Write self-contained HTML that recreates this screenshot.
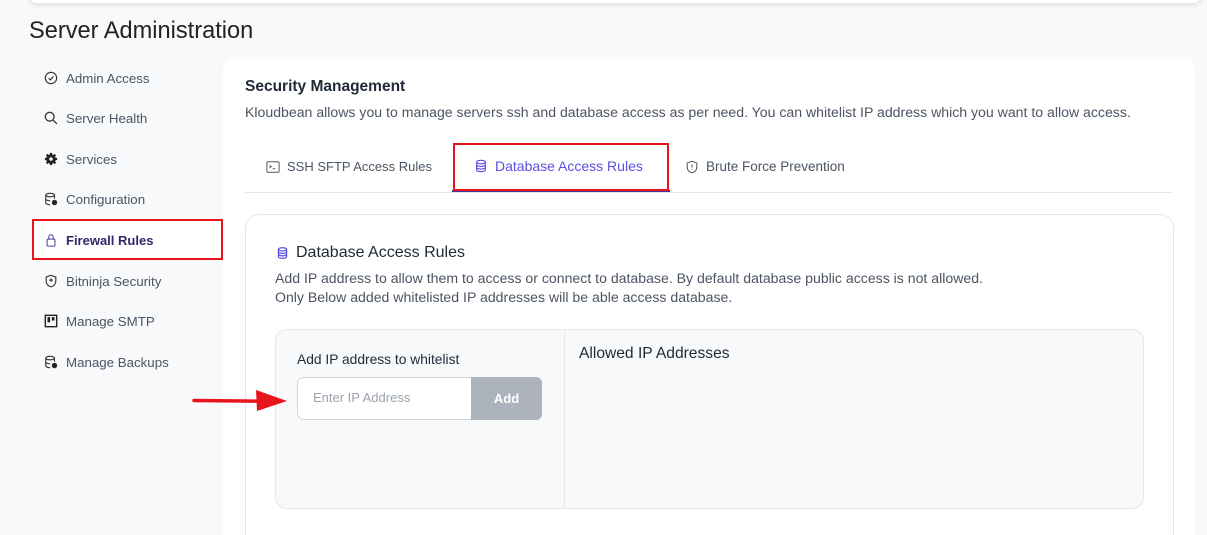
<!DOCTYPE html>
<html><head><meta charset="utf-8"><style>
*{box-sizing:border-box;margin:0;padding:0}
html,body{width:1207px;height:535px;overflow:hidden}
body{background:#f8f9fb;font-family:"Liberation Sans",sans-serif;color:#1f2937;position:relative}
.abs{position:absolute}
.topbar{left:30px;top:-10px;width:1170px;height:13px;background:#fff;box-shadow:0 2px 6px rgba(0,0,0,.12);border-radius:6px}
h1{position:absolute;left:29px;top:18px;font-size:23.6px;font-weight:400;color:#222}
.nav{position:absolute;left:44px;font-size:13.3px;color:#4b5563;display:flex;align-items:center;gap:8px;height:16px}
.nav svg{width:14px;height:14px}
.card{left:223px;top:57px;width:972px;height:478px;background:#fff;border-radius:12px 12px 0 0}
.tab{position:absolute;top:159px;font-size:13px;color:#4b5563;display:flex;align-items:center;gap:7px;font-weight:500}
.tab svg{width:14px;height:14px}
</style></head><body>
<div class="abs topbar"></div>
<h1>Server Administration</h1>

<div class="nav" style="top:70px"><svg viewBox="0 0 16 16" fill="none" stroke="#333" stroke-width="1.3"><circle cx="8" cy="8" r="6.5"/><path d="M5.3 8.2l2 2 3.5-4"/></svg>Admin Access</div>
<div class="nav" style="top:110px"><svg viewBox="0 0 16 16" fill="none" stroke="#333" stroke-width="1.5"><circle cx="6.5" cy="6.5" r="5"/><path d="M10.2 10.2l4.5 4.5"/></svg>Server Health</div>
<div class="nav" style="top:151px"><svg viewBox="0 0 16 16"><circle cx="8" cy="8" r="5.5" fill="#222"/><g stroke="#222" stroke-width="2.6"><path d="M8 1v14M1 8h14M3 3l10 10M13 3L3 13"/></g><circle cx="8" cy="8" r="2" fill="#fff"/></svg>Services</div>
<div class="nav" style="top:191px"><svg viewBox="0 0 16 16" fill="none" stroke="#333" stroke-width="1.3"><ellipse cx="7" cy="3.5" rx="5" ry="2"/><path d="M2 3.5v9c0 1.1 2.2 2 5 2M12 3.5v4M2 8c0 1.1 2.2 2 5 2"/><circle cx="12" cy="12" r="2.5" fill="#222"/></svg>Configuration</div>
<div class="abs" style="left:32px;top:219px;width:191px;height:41px;background:#fff;border:2px solid #e8141b"></div>
<div class="nav" style="top:232px;color:#2e2a6b;font-weight:700;font-size:13px"><svg viewBox="0 0 16 16" fill="none" stroke="#4a43a0" stroke-width="1.2"><rect x="3.5" y="7" width="9" height="8" rx="1.5"/><path d="M5.5 7V4.5a2.5 2.5 0 015 0V7"/></svg>Firewall Rules</div>
<div class="nav" style="top:273px"><svg viewBox="0 0 16 16" fill="none" stroke="#333" stroke-width="1.3"><path d="M8 1.5l5.5 2v4.5c0 3.5-2.5 5.8-5.5 6.7C5 13.8 2.5 11.5 2.5 8V3.5z"/><path d="M8 5v4M6 7h4"/></svg>Bitninja Security</div>
<div class="nav" style="top:313px"><svg viewBox="0 0 16 16"><rect x="1.5" y="1.5" width="13" height="13" fill="none" stroke="#222" stroke-width="1.6"/><rect x="4" y="3.5" width="3" height="6" fill="#222"/><rect x="9" y="3.5" width="3" height="4" fill="#222"/></svg>Manage SMTP</div>
<div class="nav" style="top:354px"><svg viewBox="0 0 16 16" fill="none" stroke="#333" stroke-width="1.3"><ellipse cx="7" cy="3.5" rx="5" ry="2"/><path d="M2 3.5v9c0 1.1 2.2 2 5 2M12 3.5v4M2 8c0 1.1 2.2 2 5 2"/><circle cx="12" cy="12" r="2.5" fill="#222"/></svg>Manage Backups</div>

<div class="abs card"></div>
<div class="abs" style="left:245px;top:78px;font-size:15.5px;font-weight:700;color:#1f2937">Security Management</div>
<div class="abs" style="left:245px;top:104px;font-size:14.1px;color:#4b5563">Kloudbean allows you to manage servers ssh and database access as per need. You can whitelist IP address which you want to allow access.</div>

<div class="tab" style="left:266px"><svg viewBox="0 0 16 16" fill="none" stroke="#555" stroke-width="1.1"><rect x="1" y="2" width="14" height="12" rx="1.5"/><path d="M4 6l2 1.5L4 9M7.5 10h3"/></svg>SSH SFTP Access Rules</div>
<div class="tab" style="left:474px;top:158px;color:#5b4fe0;font-size:14px"><svg viewBox="0 0 16 16" fill="none" stroke="#5b4fe0" stroke-width="1.3"><ellipse cx="8" cy="3.5" rx="5" ry="2"/><path d="M3 3.5v9c0 1.1 2.2 2 5 2s5-.9 5-2v-9M3 6.5c0 1.1 2.2 2 5 2s5-.9 5-2M3 9.5c0 1.1 2.2 2 5 2s5-.9 5-2"/></svg>Database Access Rules</div>
<div class="tab" style="left:685px;font-size:13.5px"><svg viewBox="0 0 16 16" fill="none" stroke="#555" stroke-width="1.2"><path d="M8 1.5l5.5 2v4.5c0 3.5-2.5 5.8-5.5 6.7C5 13.8 2.5 11.5 2.5 8V3.5z"/><path d="M8 5v3.5M8 10.2v.6"/></svg>Brute Force Prevention</div>
<div class="abs" style="left:245px;top:192px;width:928px;height:1px;background:#e5e7eb"></div>
<div class="abs" style="left:452px;top:190px;width:218px;height:2px;background:#3b35a0"></div>
<div class="abs" style="left:453px;top:143px;width:216px;height:48px;border:2px solid #e8141b"></div>

<div class="abs" style="left:245px;top:214px;width:929px;height:340px;border:1px solid #e5e7eb;border-radius:14px;background:#fff"></div>
<div class="abs" style="left:276px;top:244px;display:flex;align-items:center;gap:7px;font-size:16px;font-weight:500;color:#1f2937"><svg width="13" height="14" viewBox="0 0 16 16" fill="none" stroke="#5b4fe0" stroke-width="1.5"><ellipse cx="8" cy="3.5" rx="5" ry="2"/><path d="M3 3.5v9c0 1.1 2.2 2 5 2s5-.9 5-2v-9M3 6.5c0 1.1 2.2 2 5 2s5-.9 5-2M3 9.5c0 1.1 2.2 2 5 2s5-.9 5-2"/></svg>Database Access Rules</div>
<div class="abs" style="left:275px;top:269px;font-size:14.1px;color:#4b5563;line-height:19px">Add IP address to allow them to access or connect to database. By default database public access is not allowed.<br>Only Below added whitelisted IP addresses will be able access database.</div>

<div class="abs" style="left:275px;top:329px;width:869px;height:180px;border:1px solid #e5e7eb;border-radius:12px;background:#f8f9fa"></div>
<div class="abs" style="left:564px;top:330px;width:1px;height:178px;background:#e5e7eb"></div>
<div class="abs" style="left:297px;top:352px;font-size:13.8px;font-weight:500;color:#1f2937">Add IP address to whitelist</div>
<div class="abs" style="left:297px;top:377px;width:175px;height:43px;background:#fff;border:1px solid #d1d5db;border-radius:7px 0 0 7px"></div>
<div class="abs" style="left:313px;top:390px;font-size:13px;color:#9ca3af">Enter IP Address</div>
<div class="abs" style="left:471px;top:377px;width:71px;height:43px;background:#adb3bc;border-radius:0 6px 6px 0;color:#fff;font-weight:700;font-size:13px;text-align:center;line-height:43px">Add</div>
<div class="abs" style="left:579px;top:345px;font-size:15.6px;color:#1f2937">Allowed IP Addresses</div>

<svg class="abs" style="left:190px;top:388px" width="100" height="26" viewBox="0 0 100 26"><path d="M4 12.5L68 13.2" stroke="#e8141b" stroke-width="3.5" stroke-linecap="round"/><path d="M66 2L97 13 67 23z" fill="#e8141b"/></svg>
</body></html>
